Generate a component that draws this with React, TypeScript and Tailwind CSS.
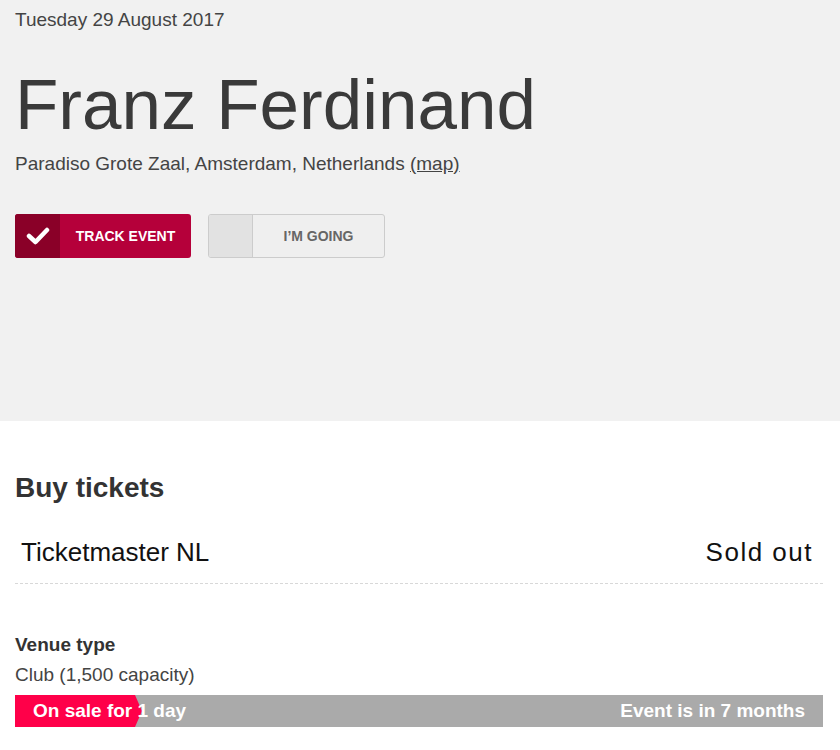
export default function App() {
    return (
        <div className="min-h-[750px] bg-white font-['Liberation_Sans',Arial,sans-serif] text-[#444]">
            {/* header */}
            <div className="bg-[#f1f1f1] pl-[15px] pr-[17px] pt-[8px] pb-[163px]">
                <div className="text-[19px] leading-[24px] text-[#444]">Tuesday 29 August 2017</div>
                <h1 className="mt-[37px] text-[71px] leading-[71px] text-[#3a3a3a]">Franz Ferdinand</h1>
                <div className="mt-[12px] text-[19px] leading-[24px] text-[#444]">
                    Paradiso Grote Zaal, Amsterdam, Netherlands <a className="underline">(map)</a>
                </div>
                <div className="mt-[38px] flex gap-[17px]">
                    <button className="flex h-[44px] w-[176px] overflow-hidden rounded-[3px] bg-[#b5003a]">
                        <span className="flex h-full w-[45px] items-center justify-center bg-[#8a0028]">
                            <svg width="24" height="20" viewBox="0 0 24 20" fill="none">
                                <polyline points="3,10 9.5,16 21,4" stroke="white" strokeWidth="4.5" strokeLinecap="round" strokeLinejoin="round" />
                            </svg>
                        </span>
                        <span className="flex flex-1 items-center justify-center text-[14px] font-bold text-white">TRACK EVENT</span>
                    </button>
                    <button className="flex h-[44px] w-[177px] overflow-hidden rounded-[3px] border border-[#cccccc] bg-[#efefef]">
                        <span className="h-full w-[44px] border-r border-[#cccccc] bg-[#e2e2e2]"></span>
                        <span className="flex flex-1 items-center justify-center text-[14px] font-bold text-[#666]">I’M GOING</span>
                    </button>
                </div>
            </div>

            {/* tickets */}
            <div className="pl-[15px] pr-[17px] pt-[51px]">
                <h2 className="text-[28px] font-bold leading-[32px] text-[#333]">Buy tickets</h2>
                <div className="mt-[32px] flex justify-between border-b border-dashed border-[#d8d8d8] pl-[6px] pr-[10px] pb-[15px] text-[26px] leading-[32px] text-[#111]">
                    <span>Ticketmaster NL</span>
                    <span className="tracking-[1.5px]">Sold out</span>
                </div>

                <div className="mt-[49px] text-[19px] font-bold leading-[24px] text-[#333]">Venue type</div>
                <div className="mt-[6px] text-[19px] leading-[24px] text-[#444]">Club (1,500 capacity)</div>

                <div className="relative mt-[8px] h-[32px] bg-[#aaaaaa]">
                    <div className="absolute left-0 top-0 h-full w-[127px] bg-[#ff0049] [clip-path:polygon(0_0,120px_0,127px_50%,120px_100%,0_100%)]"></div>
                    <div className="relative flex h-full items-center justify-between px-[18px] text-[19px] font-bold text-white">
                        <span>On sale for 1 day</span>
                        <span>Event is in 7 months</span>
                    </div>
                </div>
            </div>
        </div>
    );
}
